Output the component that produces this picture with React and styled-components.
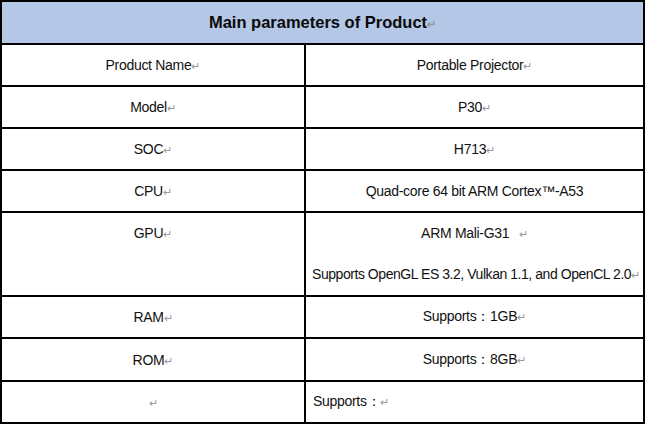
import React from "react";
import styled, { createGlobalStyle } from "styled-components";

const Global = createGlobalStyle`
  html, body { margin: 0; padding: 0; background: #fff; }
  body { font-family: "Liberation Sans", Arial, sans-serif; color: #111; }
`;

const Table = styled.table`
  border-collapse: collapse;
  width: 645px;
  margin: 0;
  table-layout: fixed;
`;

const HeadCell = styled.th`
  background: #b4c7e7;
  border: 2px solid #000;
  height: 40px;
  padding: 0;
  font-size: 16.5px;
  font-weight: bold;
  color: #0a0a0a;
  text-align: center;
  vertical-align: middle;
`;

const Row = styled.tr`
  height: ${(p) => p.$h}px;
`;

const Cell = styled.td`
  border: 2px solid #000;
  padding: 0 0 0 ${(p) => (p.$left ? 7 : 0)}px;
  font-size: 14px;
  letter-spacing: -0.3px;
  text-align: ${(p) => (p.$left ? "left" : "center")};
  vertical-align: ${(p) => (p.$top ? "top" : "middle")};
  white-space: nowrap;
  overflow: hidden;
`;

const Para = styled.div`
  height: 41px;
  line-height: 41px;
  text-align: ${(p) => (p.$left ? "left" : "center")};
  padding-left: ${(p) => (p.$left ? 6 : 0)}px;
  letter-spacing: ${(p) => (p.$left ? "-0.45px" : "-0.3px")};
`;

const Mark = styled.span`
  color: #9a9a9a;
  font-size: 11px;
  letter-spacing: 0;
  margin-left: ${(p) => p.$gap || 0}px;
`;

const Ret = ({ gap }) => <Mark $gap={gap}>↵</Mark>;

const rows = [
  ["Product Name", "Portable Projector"],
  ["Model", "P30"],
  ["SOC", "H713"],
  ["CPU", "Quad-core 64 bit ARM Cortex™-A53", true],
];

export default function App() {
  return (
    <>
      <Global />
      <Table>
        <colgroup>
          <col style={{ width: "304px" }} />
          <col />
        </colgroup>
        <tbody>
          <Row $h={43}>
            <HeadCell colSpan={2}>
              Main parameters of Product<Ret />
            </HeadCell>
          </Row>
          {rows.map(([a, b, noMark]) => (
            <Row $h={42} key={a}>
              <Cell>
                {a}
                <Ret />
              </Cell>
              <Cell>
                {b}
                {!noMark && <Ret />}
              </Cell>
            </Row>
          ))}
          <Row $h={84}>
            <Cell $top>
              <Para>
                GPU
                <Ret />
              </Para>
            </Cell>
            <Cell $top>
              <Para>
                ARM Mali-G31 <Ret gap={6} />
              </Para>
              <Para $left>
                Supports OpenGL ES 3.2, Vulkan 1.1, and OpenCL 2.0
                <Ret />
              </Para>
            </Cell>
          </Row>
          <Row $h={42}>
            <Cell>
              RAM
              <Ret />
            </Cell>
            <Cell>
              Supports：1GB
              <Ret />
            </Cell>
          </Row>
          <Row $h={43}>
            <Cell>
              ROM
              <Ret />
            </Cell>
            <Cell>
              Supports：8GB
              <Ret />
            </Cell>
          </Row>
          <Row $h={42}>
            <Cell>
              <Ret />
            </Cell>
            <Cell $left>
              Supports：
              <Ret />
            </Cell>
          </Row>
        </tbody>
      </Table>
    </>
  );
}
